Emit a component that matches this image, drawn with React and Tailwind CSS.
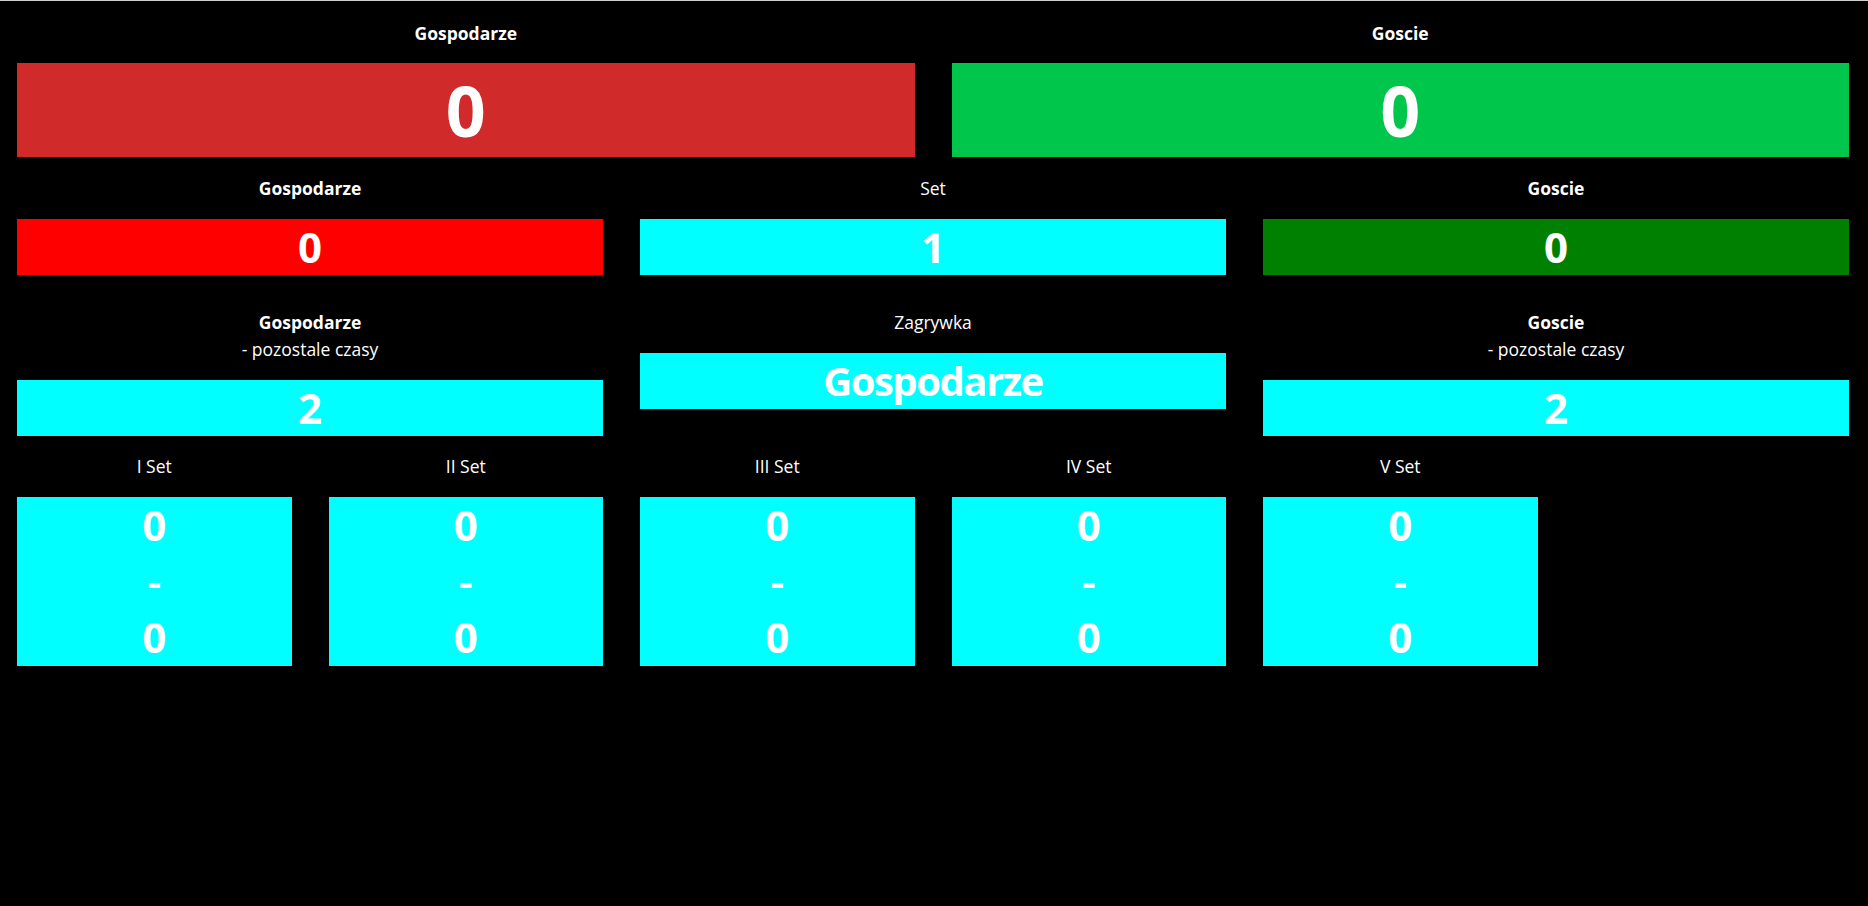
const SETS = ['I Set', 'II Set', 'III Set', 'IV Set', 'V Set'];

function Label({ children, bold }) {
  return (
    <div className={`h-[27px] text-center text-[17.5px] leading-[27px] text-white ${bold ? 'font-bold' : 'font-normal'}`}>
      {children}
    </div>
  );
}

function Box({ color, children, className = '' }) {
  return (
    <div className={`${color} text-center font-bold text-white ${className}`}>
      {children}
    </div>
  );
}

export default function App() {
  return (
    <div
      className="min-h-screen border-t border-[#cfcfcf] bg-black pl-[17px] pr-[19px] pt-[19px]"
      style={{ fontFamily: '"Open Sans", "Noto Sans", sans-serif' }}
    >
      {/* wynik meczu */}
      <div className="grid grid-cols-6 gap-x-[37px]">
        <div className="col-span-3">
          <Label bold>Gospodarze</Label>
          <Box color="bg-[#d02a2a]" className="mt-[16px] h-[94px] text-[70px] leading-[94px]">0</Box>
        </div>
        <div className="col-span-3">
          <Label bold>Goscie</Label>
          <Box color="bg-[#00c74b]" className="mt-[16px] h-[94px] text-[70px] leading-[94px]">0</Box>
        </div>
      </div>

      {/* sety */}
      <div className="mt-[18px] grid grid-cols-6 gap-x-[37px]">
        <div className="col-span-2">
          <Label bold>Gospodarze</Label>
          <Box color="bg-[#ff0000]" className="mt-[17px] h-[56px] text-[42px] leading-[56px]">0</Box>
        </div>
        <div className="col-span-2">
          <Label>Set</Label>
          <Box color="bg-[#00ffff]" className="mt-[17px] h-[56px] text-[42px] leading-[56px]">1</Box>
        </div>
        <div className="col-span-2">
          <Label bold>Goscie</Label>
          <Box color="bg-[#008000]" className="mt-[17px] h-[56px] text-[42px] leading-[56px]">0</Box>
        </div>
      </div>

      {/* czasy i zagrywka */}
      <div className="mt-[34px] grid grid-cols-6 items-start gap-x-[37px]">
        <div className="col-span-2">
          <Label bold>Gospodarze</Label>
          <Label>- pozostale czasy</Label>
          <Box color="bg-[#00ffff]" className="mt-[17px] h-[56px] text-[42px] leading-[56px]">2</Box>
        </div>
        <div className="col-span-2">
          <Label>Zagrywka</Label>
          <Box color="bg-[#00ffff]" className="mt-[17px] h-[56px] text-[40px] leading-[56px] tracking-[-1.5px]">Gospodarze</Box>
        </div>
        <div className="col-span-2">
          <Label bold>Goscie</Label>
          <Label>- pozostale czasy</Label>
          <Box color="bg-[#00ffff]" className="mt-[17px] h-[56px] text-[42px] leading-[56px]">2</Box>
        </div>
      </div>

      {/* wyniki setow */}
      <div className="mt-[17px] grid grid-cols-6 gap-x-[37px]">
        {SETS.map((s) => (
          <div key={s}>
            <Label>{s}</Label>
            <Box color="bg-[#00ffff]" className="mt-[17px] h-[169px] text-[42px] leading-[56px]">
              <div>0</div>
              <div>-</div>
              <div>0</div>
            </Box>
          </div>
        ))}
      </div>
    </div>
  );
}
